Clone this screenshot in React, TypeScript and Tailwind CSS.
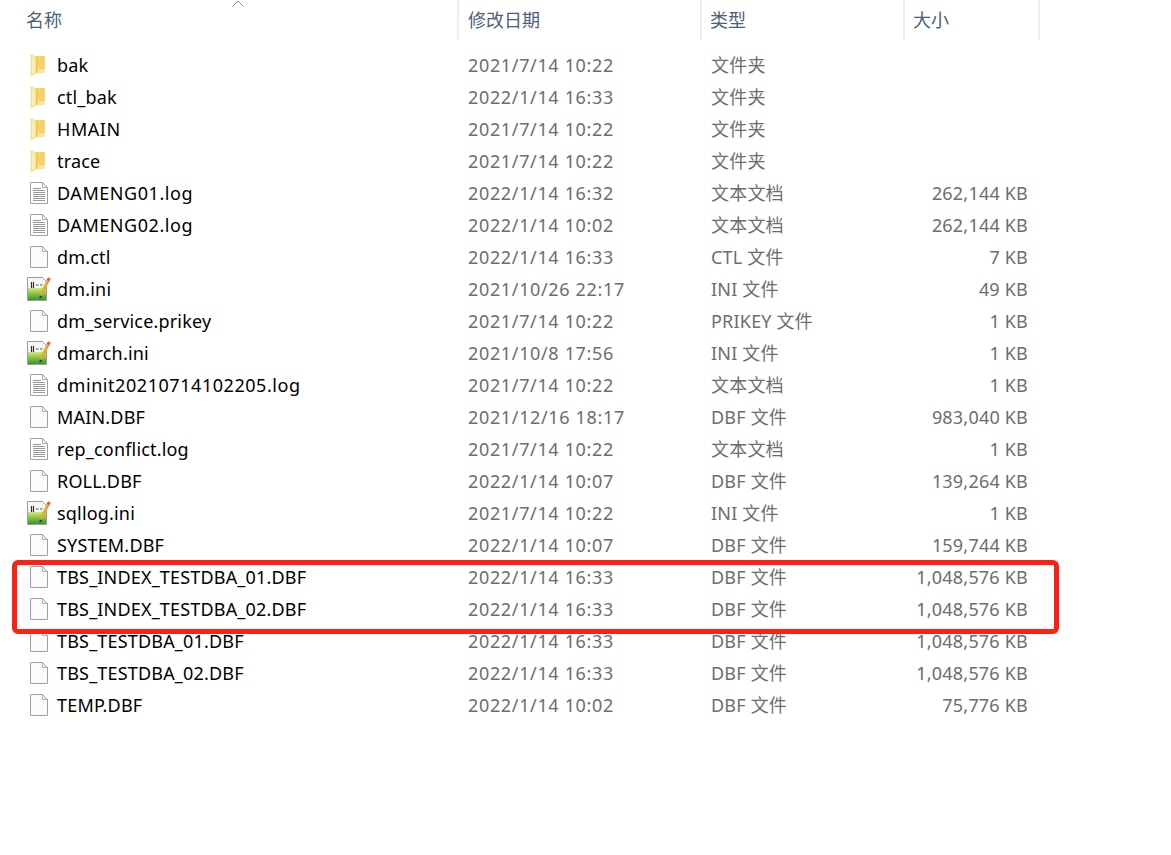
import React from 'react';

const FONT = 'font-["Noto_Sans","Noto_Sans_CJK_SC",sans-serif]';

type Kind = 'folder' | 'log' | 'file' | 'ini';

const rows: [Kind, string, string, string, string][] = [
  ['folder', 'bak', '2021/7/14 10:22', '文件夹', ''],
  ['folder', 'ctl_bak', '2022/1/14 16:33', '文件夹', ''],
  ['folder', 'HMAIN', '2021/7/14 10:22', '文件夹', ''],
  ['folder', 'trace', '2021/7/14 10:22', '文件夹', ''],
  ['log', 'DAMENG01.log', '2022/1/14 16:32', '文本文档', '262,144 KB'],
  ['log', 'DAMENG02.log', '2022/1/14 10:02', '文本文档', '262,144 KB'],
  ['file', 'dm.ctl', '2022/1/14 16:33', 'CTL 文件', '7 KB'],
  ['ini', 'dm.ini', '2021/10/26 22:17', 'INI 文件', '49 KB'],
  ['file', 'dm_service.prikey', '2021/7/14 10:22', 'PRIKEY 文件', '1 KB'],
  ['ini', 'dmarch.ini', '2021/10/8 17:56', 'INI 文件', '1 KB'],
  ['log', 'dminit20210714102205.log', '2021/7/14 10:22', '文本文档', '1 KB'],
  ['file', 'MAIN.DBF', '2021/12/16 18:17', 'DBF 文件', '983,040 KB'],
  ['log', 'rep_conflict.log', '2021/7/14 10:22', '文本文档', '1 KB'],
  ['file', 'ROLL.DBF', '2022/1/14 10:07', 'DBF 文件', '139,264 KB'],
  ['ini', 'sqllog.ini', '2021/7/14 10:22', 'INI 文件', '1 KB'],
  ['file', 'SYSTEM.DBF', '2022/1/14 10:07', 'DBF 文件', '159,744 KB'],
  ['file', 'TBS_INDEX_TESTDBA_01.DBF', '2022/1/14 16:33', 'DBF 文件', '1,048,576 KB'],
  ['file', 'TBS_INDEX_TESTDBA_02.DBF', '2022/1/14 16:33', 'DBF 文件', '1,048,576 KB'],
  ['file', 'TBS_TESTDBA_01.DBF', '2022/1/14 16:33', 'DBF 文件', '1,048,576 KB'],
  ['file', 'TBS_TESTDBA_02.DBF', '2022/1/14 16:33', 'DBF 文件', '1,048,576 KB'],
  ['file', 'TEMP.DBF', '2022/1/14 10:02', 'DBF 文件', '75,776 KB'],
];

// these names run wider in the reference than the rest
const wideNames = ['DAMENG01.log', 'DAMENG02.log', 'dminit20210714102205.log', 'HMAIN'];

function FileIcon({ kind }: { kind: Kind }) {
  if (kind === 'folder') {
    return (
      <svg width="24" height="24" viewBox="0 0 24 24">
        <path d="M6 3 H18 V20 H6 Z" fill="#f5d26c" />
        <path d="M8 16 H18 V20 H8 Z" fill="#fbe49a" />
        <path d="M4 2 L9 4 V20 L4 23 Z" fill="#fdecb0" stroke="#e8c96e" strokeWidth="0.6" />
        <path d="M9 4 H10.5 V20 H9 Z" fill="#eec55c" />
      </svg>
    );
  }
  if (kind === 'ini') {
    return (
      <svg width="24" height="24" viewBox="0 0 24 24">
        <defs>
          <linearGradient id="iniGreen" x1="0" y1="0" x2="0" y2="1">
            <stop offset="0" stopColor="#d3e86a" />
            <stop offset="1" stopColor="#2f9a35" />
          </linearGradient>
        </defs>
        <path d="M0.5 0.5 H15.5 L19.5 4.5 V23.5 H0.5 Z" fill="#f6f6f6" stroke="#9c9c9c" />
        <rect x="1" y="11" width="18" height="12" fill="url(#iniGreen)" />
        <path d="M4.5 5 V11 M6.5 5 V11" stroke="#2f2f2f" strokeWidth="1.2" />
        <path d="M9 8 H11.5 M13 8 H15.5" stroke="#555" strokeWidth="1" />
        <path d="M13.5 18.5 L21.5 3" stroke="#e8a92c" strokeWidth="3" />
        <path d="M21 3.5 L22.3 1" stroke="#c9604a" strokeWidth="3" />
        <path d="M12.5 22 L12.6 18 L15.5 19.6 Z" fill="#3a3a3a" />
      </svg>
    );
  }
  return (
    <svg width="24" height="24" viewBox="0 0 24 24">
      <path d="M3.5 1.5 H15.5 L20.5 6.5 V22.5 H3.5 Z" fill={kind === 'log' ? '#ffffff' : '#fbfbfb'} stroke="#a0a0a0" />
      <path d="M15.5 1.5 V6.5 H20.5 Z" fill="#f0f0f0" stroke="#a0a0a0" strokeWidth="0.8" />
      {kind === 'log' && (
        <path d="M6 7.5 H14 M6 9.5 H18 M6 11.5 H18 M6 13.5 H18 M6 15.5 H18 M6 17.5 H18 M6 19.5 H18" stroke="#9a9a9a" strokeWidth="1" />
      )}
    </svg>
  );
}

export default function App() {
  return (
    <div className={`relative w-[1171px] h-[855px] bg-white overflow-hidden ${FONT} text-[18px]`}>
      {/* header */}
      <div className="relative flex h-10 text-[#4c607a] leading-10">
        <div className="w-[459px] pl-[26px] border-r-2 border-[#eeeeee]">名称</div>
        <div className="w-[243px] pl-[9px] border-r-2 border-[#eeeeee]">修改日期</div>
        <div className="w-[203px] pl-[8px] border-r-2 border-[#eeeeee]">类型</div>
        <div className="w-[135px] pl-[8px] border-r-2 border-[#eeeeee]">大小</div>
        <svg className="absolute left-[232px] top-0" width="12" height="7" viewBox="0 0 12 7">
          <path d="M0.5 6.5 L6 1 L11.5 6.5" fill="none" stroke="#8a8a8a" />
        </svg>
      </div>

      {/* file list */}
      <div className="pt-[9px]">
        {rows.map(([kind, name, date, type, size]) => (
          <div key={name} className="flex h-8 items-center">
            <div className="flex w-[459px] items-center pl-[27px] text-black">
              <FileIcon kind={kind} />
              <span className={`ml-[6px] ${wideNames.includes(name) ? 'tracking-[0.55px]' : 'tracking-[0.18px]'}`}>{name}</span>
            </div>
            <div className="w-[243px] pl-[9px] text-[#6d6d6d] tracking-[0.65px]">{date}</div>
            <div className="w-[203px] pl-[9px] text-[#6d6d6d] tracking-[0.2px]">{type}</div>
            <div className="w-[123px] text-right text-[#6d6d6d] tracking-[0.2px]">{size}</div>
          </div>
        ))}
      </div>

      {/* red highlight */}
      <div className="absolute left-[12px] top-[560px] w-[1047px] h-[74px] border-[5px] border-[#ff2015] rounded-[6px]" />
    </div>
  );
}
